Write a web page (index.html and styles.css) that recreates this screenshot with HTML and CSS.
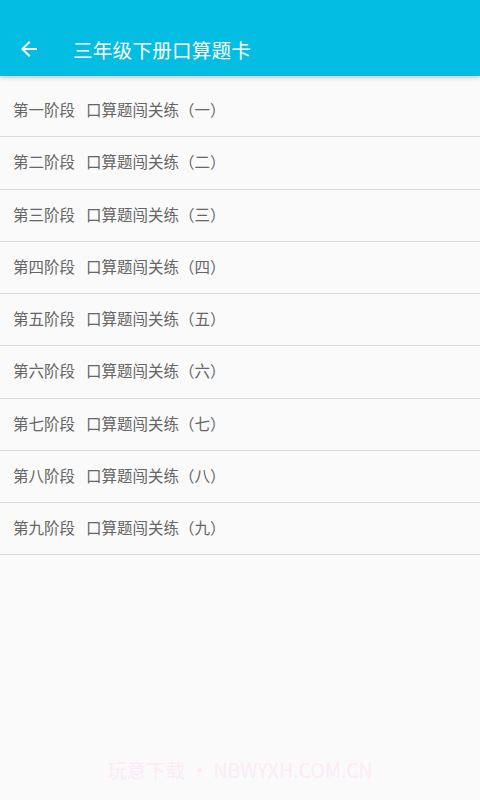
FILE: index.html
```html
<!DOCTYPE html>
<html lang="zh-CN">

<head>
    <meta charset="UTF-8">
    <meta name="viewport" content="width=device-width, initial-scale=1.0">
    <title>三年级下册口算题卡</title>
    <link rel="stylesheet" href="styles.css">
</head>

<body>
    <header class="toolbar">
        <svg class="back" width="24" height="24" viewBox="0 0 24 24">
            <path d="M20 11H7.83l5.59-5.59L12 4l-8 8 8 8 1.41-1.41L7.83 13H20v-2z" fill="#ffffff" />
        </svg>
        <h1 class="title">三年级下册口算题卡</h1>
    </header>

    <ul class="list">
        <li class="item"><span class="stage">第一阶段</span>口算题闯关练（一）</li>
        <li class="item"><span class="stage">第二阶段</span>口算题闯关练（二）</li>
        <li class="item"><span class="stage">第三阶段</span>口算题闯关练（三）</li>
        <li class="item"><span class="stage">第四阶段</span>口算题闯关练（四）</li>
        <li class="item"><span class="stage">第五阶段</span>口算题闯关练（五）</li>
        <li class="item"><span class="stage">第六阶段</span>口算题闯关练（六）</li>
        <li class="item"><span class="stage">第七阶段</span>口算题闯关练（七）</li>
        <li class="item"><span class="stage">第八阶段</span>口算题闯关练（八）</li>
        <li class="item"><span class="stage">第九阶段</span>口算题闯关练（九）</li>
    </ul>

    <div class="watermark">玩意下载 • NBWYXH.COM.CN</div>
</body>

</html>
```

FILE: styles.css
```css
body {
    margin: 0;
    width: 480px;
    height: 800px;
    background-color: #fafafa;
    font-family: Roboto, "Noto Sans CJK SC", sans-serif;
    display: flex;
    flex-direction: column;
    overflow: hidden;
}

.toolbar {
    height: 76px;
    background-color: #03bde2;
    display: flex;
    align-items: center;
    padding: 22px 0 0 17px;
    box-sizing: border-box;
    box-shadow: 0 2px 4px rgba(0, 0, 0, 0.18);
    position: relative;
    z-index: 1;
}

.back {
    display: block;
}

.title {
    margin: 0 0 0 32px;
    font-size: 19.6px;
    font-weight: normal;
    color: #ffffff;
    letter-spacing: 0.2px;
}

.list {
    list-style: none;
    margin: 0;
    padding: 9px 0 0 0;
}

.item {
    height: 48.25px;
    border-bottom: 1px solid #dcdcdc;
    display: flex;
    align-items: center;
    padding: 0 0 3px 13px;
    font-size: 15.5px;
    color: #666666;
}

.stage {
    margin-right: 11px;
}

.watermark {
    margin-top: auto;
    margin-bottom: 16px;
    text-align: center;
    font-size: 19.5px;
    color: #fcebf6;
    font-family: "Noto Sans CJK SC", sans-serif;
}
```
